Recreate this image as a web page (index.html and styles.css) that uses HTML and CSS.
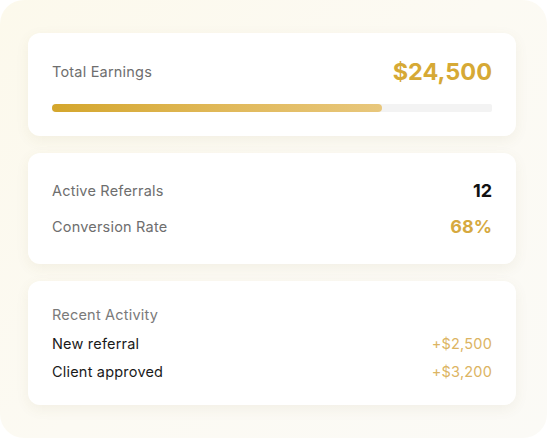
FILE: index.html
```html
<!DOCTYPE html>
<html>
<head>
<meta charset="utf-8">
<link rel="stylesheet" href="styles.css">
</head>
<body>
<div class="panel">
  <section class="card earnings">
    <div class="row">
      <span class="label">Total Earnings</span>
      <span class="amount">$24,500</span>
    </div>
    <div class="track"><div class="fill" style="width:75%"></div></div>
  </section>
  <section class="card stats">
    <div class="row stat">
      <span class="label">Active Referrals</span>
      <span class="value dark">12</span>
    </div>
    <div class="row stat">
      <span class="label">Conversion Rate</span>
      <span class="value gold">68%</span>
    </div>
  </section>
  <section class="card activity">
    <div class="title">Recent Activity</div>
    <div class="row item">
      <span class="name">New referral</span>
      <span class="plus">+$2,500</span>
    </div>
    <div class="row item">
      <span class="name">Client approved</span>
      <span class="plus">+$3,200</span>
    </div>
  </section>
</div>
</body>
</html>
```

FILE: styles.css
```css
html, body {
  margin: 0;
  padding: 0;
  background: #ffffff;
}
body {
  font-family: Inter, "Noto Sans", sans-serif;
}
.panel {
  width: 547px;
  height: 438px;
  box-sizing: border-box;
  padding: 33px 31px 0 28px;
  border-radius: 24px;
  background: linear-gradient(135deg, #fcf9ec 0%, #fcfaf3 50%, #fbfaf6 100%);
  display: flex;
  flex-direction: column;
  gap: 17px;
}
.card {
  background: #ffffff;
  border-radius: 12px;
  box-shadow: 0 4px 14px rgba(120, 100, 40, 0.07);
  padding: 24px;
  display: flex;
  flex-direction: column;
}
.row {
  display: flex;
  justify-content: space-between;
  align-items: center;
}
.label {
  font-size: 14.5px;
  letter-spacing: 0.2px;
  color: #6e6e6e;
}
.earnings .row {
  height: 29px;
}
.amount {
  font-size: 23.5px;
  font-weight: 700;
  color: #d6a935;
}
.track {
  margin-top: 18px;
  height: 8px;
  background: #f3f3f3;
  border-radius: 2px;
  overflow: hidden;
}
.fill {
  height: 100%;
  border-radius: 4px;
  background: linear-gradient(90deg, #d4a62c 0%, #e0b858 50%, #e8c77c 100%);
}
.stats {
  gap: 9px;
}
.stat {
  height: 27px;
}
.value {
  font-size: 18px;
  font-weight: 700;
}
.value.dark {
  color: #111111;
}
.value.gold {
  color: #d6a93f;
}
.activity {
  gap: 8px;
}
.title {
  font-size: 14.5px;
  letter-spacing: 0.2px;
  line-height: 20px;
  color: #7a7a7a;
}
.item {
  height: 20px;
}
.name {
  font-size: 14.5px;
  letter-spacing: 0.2px;
  color: #1a1a1a;
}
.plus {
  font-size: 14.5px;
  letter-spacing: 0.2px;
  color: #dcb462;
}
```
